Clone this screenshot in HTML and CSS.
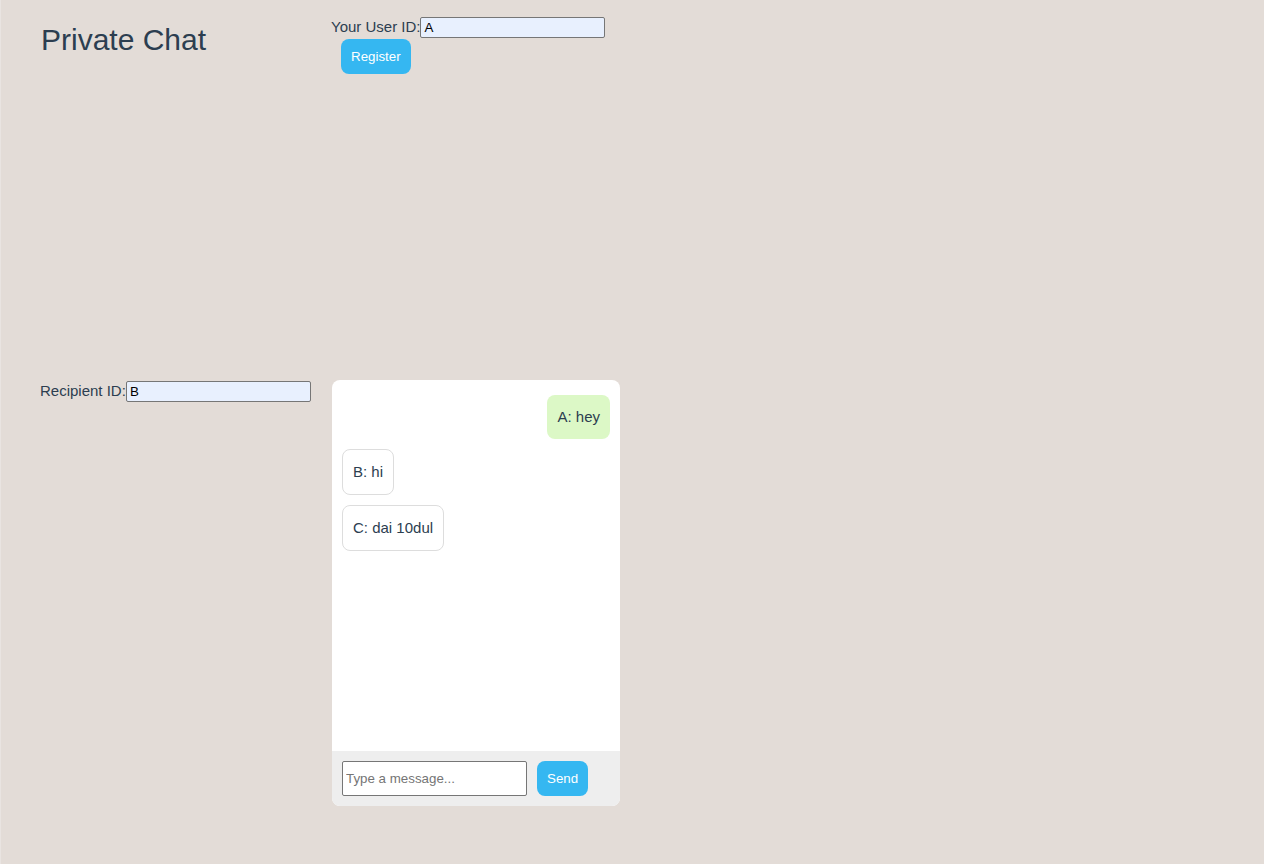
FILE: index.html
```html
<!DOCTYPE html>
<html lang="en">
<head>
<meta charset="utf-8">
<title>Private Chat</title>
<link rel="stylesheet" href="styles.css">
</head>
<body>
<div class="app">
  <h1 class="title">Private Chat</h1>
  <div class="register">
    <label class="field-label" for="uid">Your User ID:</label><input class="id-input" id="uid" type="text" value="A"><button class="btn register-btn">Register</button>
  </div>
  <div class="recipient">
    <label class="field-label" for="rid">Recipient ID:</label><input class="id-input" id="rid" type="text" value="B">
  </div>
  <div class="chat">
    <div class="messages">
      <div class="msg sent">A: hey</div>
      <div class="msg received">B: hi</div>
      <div class="msg received">C: dai 10dul</div>
    </div>
    <div class="composer">
      <input class="msg-input" type="text" placeholder="Type a message..."><button class="btn send-btn">Send</button>
    </div>
  </div>
</div>
</body>
</html>
```
FILE: styles.css
```css
html {
  background: linear-gradient(to right, #e9e4e1 1px, #e3dcd7 1px);
}
body {
  margin: 0;
  font-family: "Liberation Sans", Arial, sans-serif;
  color: #2c3e50;
  line-height: 1.6;
  min-height: 864px;
}
.app {
  display: grid;
  grid-template-columns: 272px 288px;
  grid-template-rows: 344px auto;
  column-gap: 20px;
  row-gap: 20px;
  padding: 16px 40px;
  align-items: start;
}
.title {
  margin: 0;
  padding-left: 1px;
  font-size: 30px;
  font-weight: normal;
  line-height: 1.6;
  color: #2c3e50;
}
.register,
.recipient {
  font-size: 15px;
  margin-top: -1px;
}
.register {
  margin-left: -1px;
}
.field-label {
  color: #2c3e50;
}
.id-input {
  box-sizing: border-box;
  width: 185px;
  height: 21px;
  padding: 1px 3px;
  border: 1px solid #767676;
  border-radius: 2px;
  background: #e8f0fe;
  color: #000;
  font-family: "Liberation Sans", Arial, sans-serif;
  font-size: 13.333px;
  vertical-align: baseline;
}
.btn {
  box-sizing: border-box;
  height: 35px;
  padding: 0 10px;
  border: none;
  border-radius: 8px;
  background: #35b7f1;
  color: #fff;
  font-family: "Liberation Sans", Arial, sans-serif;
  font-size: 13.333px;
  line-height: 35px;
}
.register-btn {
  margin-left: 10px;
}
.chat {
  background: #fff;
  border-radius: 8px;
  overflow: hidden;
  display: flex;
  flex-direction: column;
}
.messages {
  box-sizing: border-box;
  height: 371px;
  padding: 10px;
  display: flex;
  flex-direction: column;
}
.msg {
  margin: 5px 0;
  padding: 10px;
  border-radius: 8px;
  font-size: 15px;
  line-height: 24px;
  color: #2c3e50;
}
.msg.sent {
  align-self: flex-end;
  background: #dcf8c6;
}
.msg.received {
  align-self: flex-start;
  background: #fff;
  border: 1px solid #dddddd;
}
.composer {
  background: #eeeeee;
  padding: 10px;
  display: flex;
  gap: 10px;
}
.msg-input {
  box-sizing: border-box;
  width: 185px;
  height: 35px;
  padding: 1px 3px;
  border: 1px solid #767676;
  border-radius: 2px;
  background: #fff;
  font-family: "Liberation Sans", Arial, sans-serif;
  font-size: 13.333px;
}
.msg-input::placeholder {
  color: #757575;
}
```
